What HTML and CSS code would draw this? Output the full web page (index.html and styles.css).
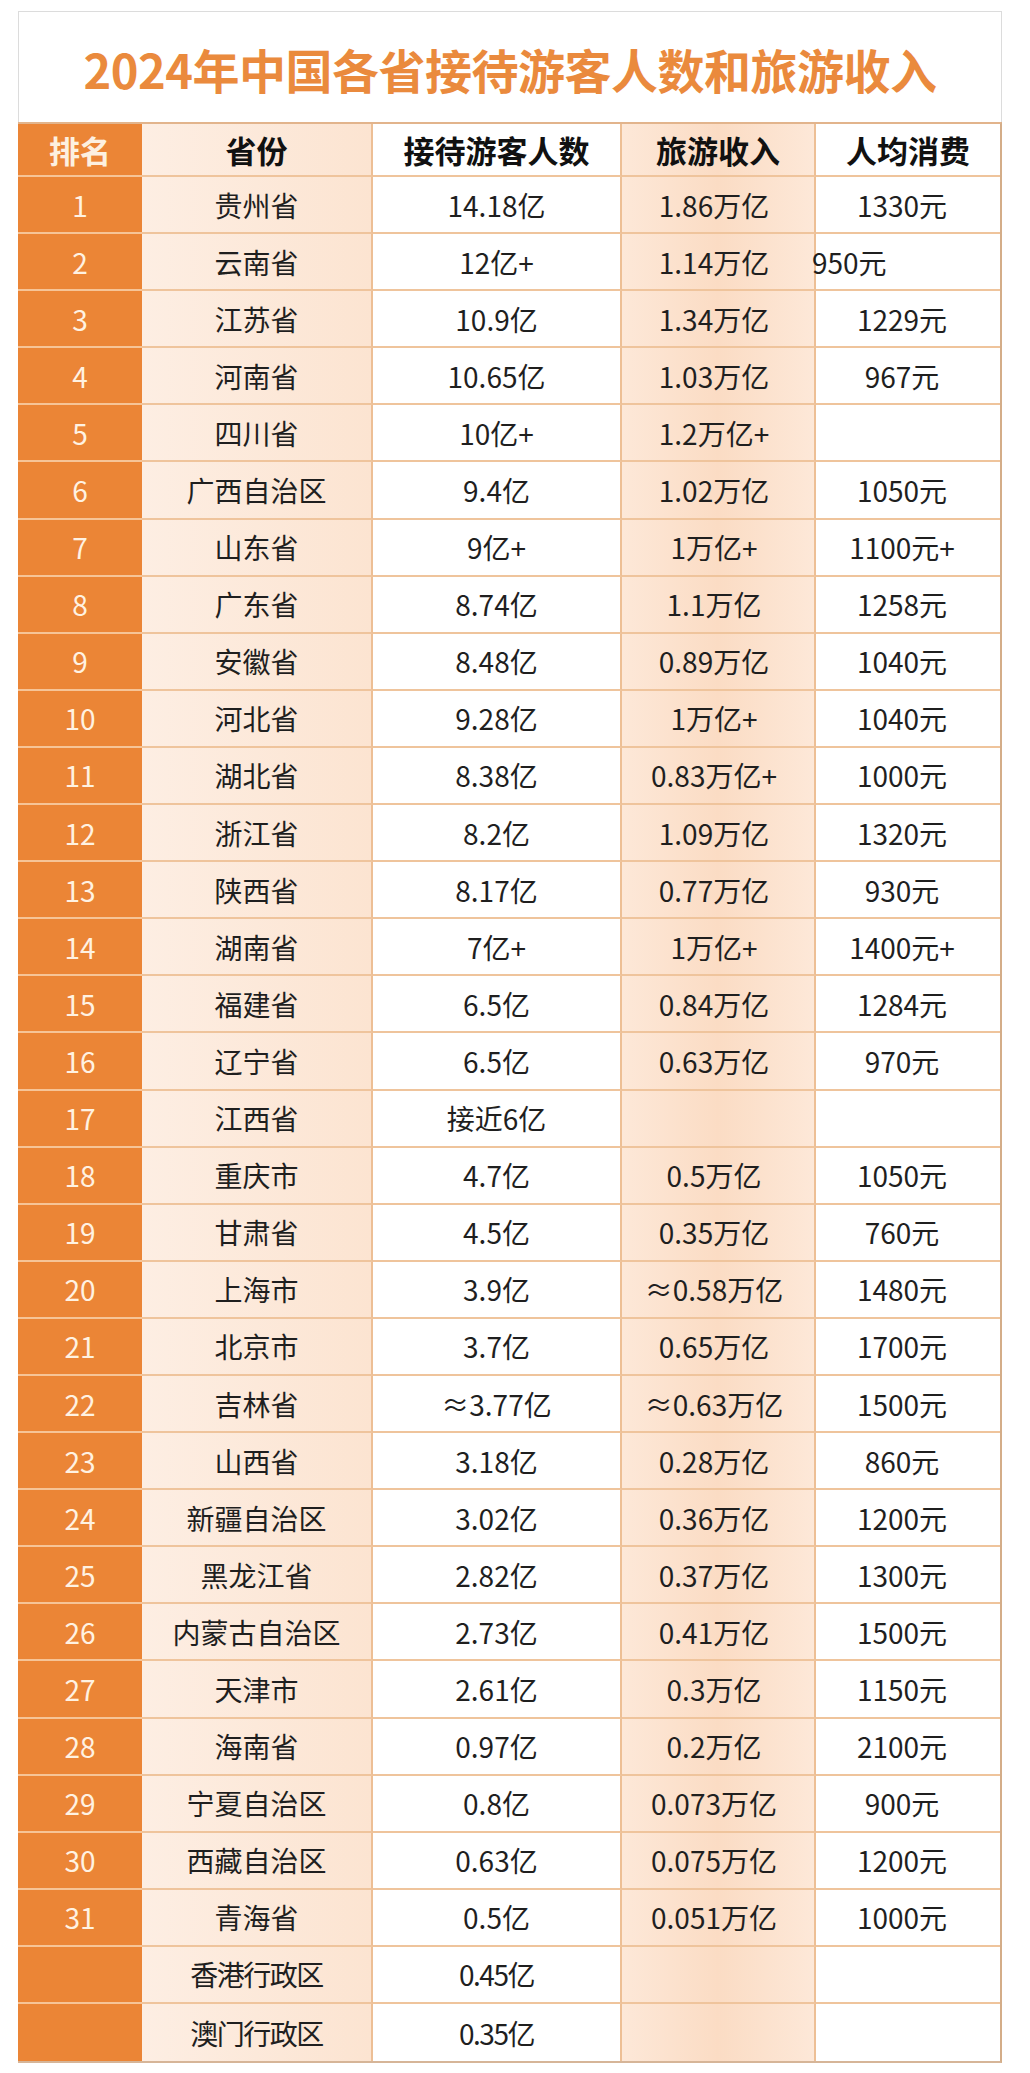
FILE: index.html
```html
<!DOCTYPE html>
<html lang="zh-CN">
<head>
<meta charset="utf-8">
<title>2024年中国各省接待游客人数和旅游收入</title>
<link rel="stylesheet" href="styles.css">
</head>
<body>
<div class="frame">
  <div class="title-box"><h1 class="title">2024年中国各省接待游客人数和旅游收入</h1></div>
  <div class="table">
    <div class="row head">
      <div class="c rank">排名</div>
      <div class="c prov">省份</div>
      <div class="c vis">接待游客人数</div>
      <div class="c rev">旅游收入</div>
      <div class="c per">人均消费</div>
    </div>
    <div class="row"><div class="c rank">1</div><div class="c prov">贵州省</div><div class="c vis">14.18亿</div><div class="c rev">1.86万亿</div><div class="c per">1330元</div></div>
    <div class="row"><div class="c rank">2</div><div class="c prov">云南省</div><div class="c vis">12亿+</div><div class="c rev">1.14万亿</div><div class="c per left"><span class="shift">950元</span></div></div>
    <div class="row"><div class="c rank">3</div><div class="c prov">江苏省</div><div class="c vis">10.9亿</div><div class="c rev">1.34万亿</div><div class="c per">1229元</div></div>
    <div class="row"><div class="c rank">4</div><div class="c prov">河南省</div><div class="c vis">10.65亿</div><div class="c rev">1.03万亿</div><div class="c per">967元</div></div>
    <div class="row"><div class="c rank">5</div><div class="c prov">四川省</div><div class="c vis">10亿+</div><div class="c rev">1.2万亿+</div><div class="c per"></div></div>
    <div class="row"><div class="c rank">6</div><div class="c prov">广西自治区</div><div class="c vis">9.4亿</div><div class="c rev">1.02万亿</div><div class="c per">1050元</div></div>
    <div class="row"><div class="c rank">7</div><div class="c prov">山东省</div><div class="c vis">9亿+</div><div class="c rev">1万亿+</div><div class="c per">1100元+</div></div>
    <div class="row"><div class="c rank">8</div><div class="c prov">广东省</div><div class="c vis">8.74亿</div><div class="c rev">1.1万亿</div><div class="c per">1258元</div></div>
    <div class="row"><div class="c rank">9</div><div class="c prov">安徽省</div><div class="c vis">8.48亿</div><div class="c rev">0.89万亿</div><div class="c per">1040元</div></div>
    <div class="row"><div class="c rank">10</div><div class="c prov">河北省</div><div class="c vis">9.28亿</div><div class="c rev">1万亿+</div><div class="c per">1040元</div></div>
    <div class="row"><div class="c rank">11</div><div class="c prov">湖北省</div><div class="c vis">8.38亿</div><div class="c rev">0.83万亿+</div><div class="c per">1000元</div></div>
    <div class="row"><div class="c rank">12</div><div class="c prov">浙江省</div><div class="c vis">8.2亿</div><div class="c rev">1.09万亿</div><div class="c per">1320元</div></div>
    <div class="row"><div class="c rank">13</div><div class="c prov">陕西省</div><div class="c vis">8.17亿</div><div class="c rev">0.77万亿</div><div class="c per">930元</div></div>
    <div class="row"><div class="c rank">14</div><div class="c prov">湖南省</div><div class="c vis">7亿+</div><div class="c rev">1万亿+</div><div class="c per">1400元+</div></div>
    <div class="row"><div class="c rank">15</div><div class="c prov">福建省</div><div class="c vis">6.5亿</div><div class="c rev">0.84万亿</div><div class="c per">1284元</div></div>
    <div class="row"><div class="c rank">16</div><div class="c prov">辽宁省</div><div class="c vis">6.5亿</div><div class="c rev">0.63万亿</div><div class="c per">970元</div></div>
    <div class="row"><div class="c rank">17</div><div class="c prov">江西省</div><div class="c vis">接近6亿</div><div class="c rev"></div><div class="c per"></div></div>
    <div class="row"><div class="c rank">18</div><div class="c prov">重庆市</div><div class="c vis">4.7亿</div><div class="c rev">0.5万亿</div><div class="c per">1050元</div></div>
    <div class="row"><div class="c rank">19</div><div class="c prov">甘肃省</div><div class="c vis">4.5亿</div><div class="c rev">0.35万亿</div><div class="c per">760元</div></div>
    <div class="row"><div class="c rank">20</div><div class="c prov">上海市</div><div class="c vis">3.9亿</div><div class="c rev">≈0.58万亿</div><div class="c per">1480元</div></div>
    <div class="row"><div class="c rank">21</div><div class="c prov">北京市</div><div class="c vis">3.7亿</div><div class="c rev">0.65万亿</div><div class="c per">1700元</div></div>
    <div class="row"><div class="c rank">22</div><div class="c prov">吉林省</div><div class="c vis">≈3.77亿</div><div class="c rev">≈0.63万亿</div><div class="c per">1500元</div></div>
    <div class="row"><div class="c rank">23</div><div class="c prov">山西省</div><div class="c vis">3.18亿</div><div class="c rev">0.28万亿</div><div class="c per">860元</div></div>
    <div class="row"><div class="c rank">24</div><div class="c prov">新疆自治区</div><div class="c vis">3.02亿</div><div class="c rev">0.36万亿</div><div class="c per">1200元</div></div>
    <div class="row"><div class="c rank">25</div><div class="c prov">黑龙江省</div><div class="c vis">2.82亿</div><div class="c rev">0.37万亿</div><div class="c per">1300元</div></div>
    <div class="row"><div class="c rank">26</div><div class="c prov">内蒙古自治区</div><div class="c vis">2.73亿</div><div class="c rev">0.41万亿</div><div class="c per">1500元</div></div>
    <div class="row"><div class="c rank">27</div><div class="c prov">天津市</div><div class="c vis">2.61亿</div><div class="c rev">0.3万亿</div><div class="c per">1150元</div></div>
    <div class="row"><div class="c rank">28</div><div class="c prov">海南省</div><div class="c vis">0.97亿</div><div class="c rev">0.2万亿</div><div class="c per">2100元</div></div>
    <div class="row"><div class="c rank">29</div><div class="c prov">宁夏自治区</div><div class="c vis">0.8亿</div><div class="c rev">0.073万亿</div><div class="c per">900元</div></div>
    <div class="row"><div class="c rank">30</div><div class="c prov">西藏自治区</div><div class="c vis">0.63亿</div><div class="c rev">0.075万亿</div><div class="c per">1200元</div></div>
    <div class="row"><div class="c rank">31</div><div class="c prov">青海省</div><div class="c vis">0.5亿</div><div class="c rev">0.051万亿</div><div class="c per">1000元</div></div>
    <div class="row extra"><div class="c rank"></div><div class="c prov">香港行政区</div><div class="c vis">0.45亿</div><div class="c rev"></div><div class="c per"></div></div>
    <div class="row extra last"><div class="c rank"></div><div class="c prov">澳门行政区</div><div class="c vis">0.35亿</div><div class="c rev"></div><div class="c per"></div></div>
  </div>
</div>
</body>
</html>
```

FILE: styles.css
```css
* { box-sizing: border-box; }
html, body { margin: 0; padding: 0; background: #ffffff; }
body {
  font-family: "Noto Sans CJK SC", "Noto Sans", sans-serif;
  color: #1f1f1f;
}
.frame {
  margin: 11px 0 0 18px;
  width: 984px;
}
.title-box {
  height: 111px;
  border: 1px solid #dcdcdc;
  border-bottom: 0;
  display: flex;
  align-items: center;
  justify-content: center;
}
.title {
  margin: 0;
  font-size: 47px;
  font-weight: 700;
  color: #ea8a3d;
  letter-spacing: -0.5px;
  line-height: 1;
  padding-top: 2px;
}
.table {
  height: 1941px;
  display: flex;
  flex-direction: column;
  border-top: 2px solid #e2b48c;
  border-right: 2px solid #d4ad88;
  border-bottom: 2px solid #d6b598;
}
.row {
  flex: 1 1 0;
  display: grid;
  grid-template-columns: 124px 231px 249px 194px 184px;
}
.row.head { flex: 0 0 53px; }
.c {
  display: flex;
  align-items: center;
  justify-content: center;
  font-size: 28px;
  line-height: 1;
  white-space: nowrap;
  border-right: 2px solid #edbf95;
  border-bottom: 2px solid #efc49c;
}
.row.last .c { border-bottom: 0; }
.c:last-child { border-right: 0; }
.rank {
  background: #eb8536;
  color: #fff2e2;
  border-right: 0;
  border-bottom-color: #f6c497;
}
.prov { background: linear-gradient(to right, #fdeee3, #fce4d1); }
.vis { background: #ffffff; }
.rev { background: linear-gradient(to right, #fde8d8, #fbdcc4 50%, #fde8d8); padding-right: 8px; }
.per { background: #ffffff; padding-right: 12px; }
.per.left { justify-content: flex-start; padding: 0; }
.shift { margin-left: -4px; }
.head .c {
  font-size: 31px;
  font-weight: 700;
  color: #111111;
  padding-right: 0;
}
.head .rank { color: #fdf0e0; }
.extra .prov, .extra .vis { letter-spacing: -1.5px; }
```
